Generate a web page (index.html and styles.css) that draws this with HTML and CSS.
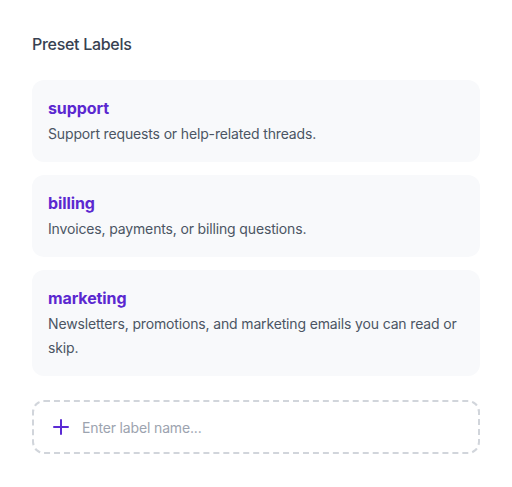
FILE: index.html
```html
<!DOCTYPE html>
<html lang="en">
<head>
  <meta charset="UTF-8">
  <meta name="viewport" content="width=device-width, initial-scale=1.0">
  <link rel="stylesheet" href="styles.css">
</head>
<body>
  <div class="panel">
    <div class="panel-title">Preset Labels</div>

    <div class="label-list">
      <div class="label-card">
        <div class="label-name">support</div>
        <div class="label-desc">Support requests or help-related threads.</div>
      </div>
      <div class="label-card">
        <div class="label-name">billing</div>
        <div class="label-desc">Invoices, payments, or billing questions.</div>
      </div>
      <div class="label-card">
        <div class="label-name">marketing</div>
        <div class="label-desc">Newsletters, promotions, and marketing emails you can read or skip.</div>
      </div>
    </div>

    <label class="add-label">
      <svg class="add-icon" width="18" height="18" viewBox="0 0 18 18" fill="none">
        <path d="M9 2v14M2 9h14" stroke="#5b2bd4" stroke-width="2" stroke-linecap="round"/>
      </svg>
      <input class="add-input" type="text" placeholder="Enter label name...">
    </label>
  </div>
</body>
</html>
```

FILE: styles.css
```css
body {
  margin: 0;
  background-color: #ffffff;
  font-family: Inter, "Noto Sans", sans-serif;
}

.panel {
  padding: 32px 32px;
}

.panel-title {
  font-size: 16px;
  line-height: 24px;
  font-weight: 500;
  letter-spacing: -0.3px;
  color: #374151;
  margin-bottom: 24px;
}

.label-list {
  display: flex;
  flex-direction: column;
  gap: 13px;
}

.label-card {
  background-color: #f8f9fb;
  border-radius: 12px;
  padding: 16px 16px;
}

.label-name {
  font-size: 16px;
  line-height: 24px;
  font-weight: 700;
  letter-spacing: -0.1px;
  color: #5b28d0;
}

.label-desc {
  margin-top: 2px;
  font-size: 14px;
  line-height: 24px;
  letter-spacing: -0.15px;
  color: #4b5563;
}

.add-label {
  margin-top: 24px;
  display: flex;
  align-items: center;
  gap: 12px;
  height: 54px;
  box-sizing: border-box;
  padding: 0 18px;
  border: 2px dashed #d1d5db;
  border-radius: 12px;
}

.add-icon {
  flex-shrink: 0;
}

.add-input {
  flex: 1;
  border: none;
  outline: none;
  background: transparent;
  padding: 0;
  font-family: inherit;
  font-size: 14px;
  letter-spacing: -0.15px;
  color: #374151;
}

.add-input::placeholder {
  color: #9ca3af;
}
```
